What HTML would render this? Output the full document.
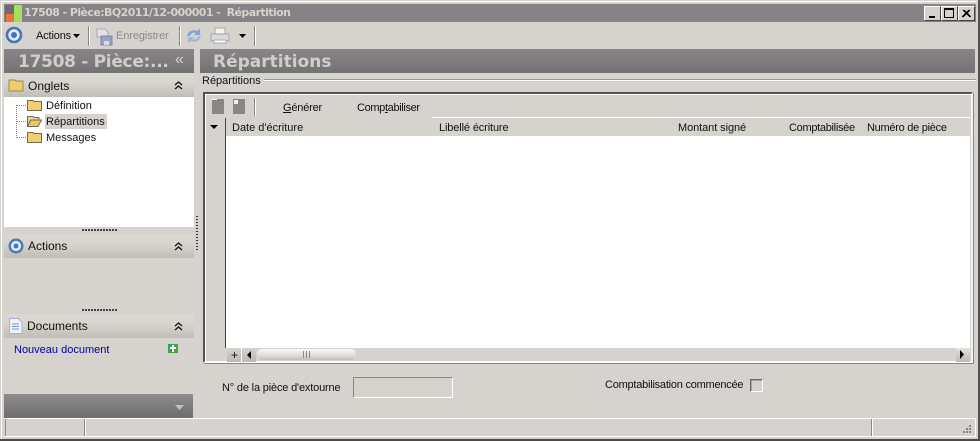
<!DOCTYPE html>
<html><head><meta charset="utf-8"><style>
html,body{margin:0;padding:0}
body{width:980px;height:441px;overflow:hidden;background:#d6d3ce;position:relative;font:11px "Liberation Sans",sans-serif;color:#111}
.a{position:absolute}
.t{position:absolute;white-space:nowrap;line-height:14px}
.hd{position:absolute;background:linear-gradient(#dcd9d4,#d8d5cf 40%,#c0bdb7)}
.bigbar{position:absolute;background:linear-gradient(#878587,#7e7c7e 50%,#737273)}
.big{position:absolute;white-space:nowrap;font:bold 17px "DejaVu Sans",sans-serif;color:#d0cec9;line-height:24px}
.sep{position:absolute;width:1px;background:#8a8884;border-right:1px solid #fff}
.chev{position:absolute;width:9px;height:9px}
</style></head><body>
<!-- window frame -->
<div class="a" style="left:1px;top:1px;width:978px;height:1px;background:#fff"></div>
<div class="a" style="left:1px;top:1px;width:1px;height:438px;background:#fff"></div>
<div class="a" style="left:977px;top:0;width:3px;height:441px;background:#55534f;border-left:1px solid #d6d3ce;box-sizing:border-box"></div>
<div class="a" style="left:0;top:439px;width:980px;height:2px;background:#4c4a48"></div>
<!-- title bar -->
<div class="a" style="left:4px;top:4px;width:972px;height:18px;background:#858385"></div>
<div class="a" style="left:5px;top:5px;width:17px;height:17px;background:#6d6b6d"></div>
<div class="a" style="left:14px;top:5px;width:8px;height:17px;background:#a5e05a"></div>
<div class="a" style="left:6px;top:14px;width:8px;height:8px;background:#e8763a"></div>
<div class="t" style="left:24px;top:6px;font:bold 11px/14px 'DejaVu Sans',sans-serif;color:#d6d3ce;letter-spacing:-.58px;white-space:pre">17508 - Pièce:BQ2011/12-000001 -  Répartition</div>
<!-- window buttons -->
<div class="a" style="left:924px;top:6px;width:15px;height:13px;background:#d6d3ce;border:1px solid;border-color:#fff #444 #444 #fff"><div class="a" style="left:4px;top:9px;width:6px;height:2px;background:#000"></div></div>
<div class="a" style="left:941px;top:6px;width:15px;height:13px;background:#d6d3ce;border:1px solid;border-color:#fff #444 #444 #fff"><div class="a" style="left:2px;top:1px;width:8px;height:7px;border:1px solid #000;border-top-width:2px"></div></div>
<div class="a" style="left:958px;top:6px;width:15px;height:13px;background:#d6d3ce;border:1px solid;border-color:#fff #444 #444 #fff"><svg class="a" style="left:3px;top:2px" width="9" height="9"><path d="M1 1L8 8M8 1L1 8M2 1L9 8M7 1L0 8" stroke="#000" stroke-width="1"/></svg></div>
<!-- toolbar -->
<svg class="a" style="left:5px;top:26px" width="18" height="18"><circle cx="9" cy="9" r="7" fill="#e6ebf5" stroke="#4474bd" stroke-width="2.6"/><circle cx="9" cy="9" r="3" fill="#3f76c6"/></svg>
<div class="t" style="left:36px;top:29px;letter-spacing:-.15px">Actions</div>
<svg class="a" style="left:72px;top:33px" width="9" height="6"><path d="M1 1H8L4.5 5Z" fill="#000"/></svg>
<div class="sep" style="left:88px;top:26px;height:20px"></div>
<svg class="a" style="left:96px;top:28px" width="17" height="18"><path d="M1 1H9L12 4V9H1Z" fill="#e4e3e2" stroke="#aab"/><rect x="5" y="8" width="11" height="9" fill="#98a3c4" stroke="#7b86aa"/><rect x="8" y="13" width="5" height="4" fill="#dcdcdc"/></svg>
<div class="t" style="left:116px;top:29px;color:#8c8a86;letter-spacing:-.1px">Enregistrer</div>
<div class="sep" style="left:179px;top:26px;height:20px"></div>
<svg class="a" style="left:185px;top:27px" width="18" height="18"><path d="M2 9C3 4 8 2 12 4L15 2V8H9L11 6C8 5 6 6 5 9Z" fill="#7fa6cf"/><path d="M16 9C15 14 10 16 6 14L3 16V10H9L7 12C10 13 12 12 13 9Z" fill="#9fb9d6"/></svg>
<svg class="a" style="left:210px;top:27px" width="20" height="18"><rect x="5" y="1" width="10" height="6" fill="#f2f2f2" stroke="#aaa"/><rect x="1" y="7" width="18" height="7" rx="1" fill="#d9d9dc" stroke="#a4a4a8"/><rect x="4" y="13" width="12" height="3" fill="#fff" stroke="#aaa"/></svg>
<svg class="a" style="left:238px;top:33px" width="9" height="6"><path d="M1 1H8L4.5 5Z" fill="#000"/></svg>
<div class="sep" style="left:254px;top:26px;height:20px"></div>
<!-- left big header -->
<div class="bigbar" style="left:4px;top:49px;width:190px;height:24px"></div>
<div class="big" style="left:18px;top:50px;letter-spacing:-.3px">17508 - Pièce:...</div>
<div class="t" style="left:175px;top:53px;font-size:16px;color:#d6d3ce">«</div>
<!-- right big header -->
<div class="bigbar" style="left:200px;top:49px;width:775px;height:24px"></div>
<div class="big" style="left:213px;top:50px">Répartitions</div>
<!-- splitter dots -->
<div class="a" style="left:196px;top:216px;width:2px;height:34px;background:repeating-linear-gradient(#333 0 1px,transparent 1px 3px)"></div>
<!-- Onglets -->
<div class="hd" style="left:4px;top:73px;width:190px;height:24px"></div>
<svg class="a" style="left:8px;top:78px" width="16" height="14"><path d="M1 2H7L8 3H15V13H1Z" fill="#f0cd6c" stroke="#a08a50"/></svg>
<div class="t" style="left:28px;top:79px;font-size:12px">Onglets</div>
<svg class="chev" style="left:174px;top:81px"><path d="M1 4L4.5 1L8 4M1 8L4.5 5L8 8" fill="none" stroke="#111" stroke-width="1.3"/></svg>
<div class="a" style="left:4px;top:97px;width:190px;height:130px;background:#fff"></div>
<!-- tree lines -->
<div class="a" style="left:16px;top:105px;width:0;height:33px;border-left:1px dotted #888"></div>
<div class="a" style="left:16px;top:105px;width:10px;border-top:1px dotted #888"></div>
<div class="a" style="left:16px;top:121px;width:10px;border-top:1px dotted #888"></div>
<div class="a" style="left:16px;top:137px;width:10px;border-top:1px dotted #888"></div>
<svg class="a" style="left:27px;top:99px" width="15" height="12"><path d="M.5 1.5H6L7 2.5H14.5V11.5H.5Z" fill="#f2d070" stroke="#706a50"/></svg>
<svg class="a" style="left:27px;top:115px" width="15" height="12"><path d="M.5 1.5H6L7 2.5H12V5H4L.5 11.5Z" fill="#e8d9a0" stroke="#706a50"/><path d="M3.5 5H14.5L11 11.5H.5Z" fill="#f0c860" stroke="#706a50"/></svg>
<svg class="a" style="left:27px;top:131px" width="15" height="12"><path d="M.5 1.5H6L7 2.5H14.5V11.5H.5Z" fill="#f2d070" stroke="#706a50"/></svg>
<div class="t" style="left:46px;top:99px">Définition</div>
<div class="a" style="left:45px;top:114px;width:62px;height:15px;background:#d6d3ce"></div>
<div class="t" style="left:46px;top:115px">Répartitions</div>
<div class="t" style="left:46px;top:131px">Messages</div>
<div class="a" style="left:82px;top:229px;width:35px;height:2px;background:repeating-linear-gradient(90deg,#444 0 2px,transparent 2px 3px)"></div>
<!-- Actions -->
<div class="hd" style="left:4px;top:234px;width:190px;height:24px"></div>
<svg class="a" style="left:8px;top:238px" width="16" height="16"><circle cx="8" cy="8" r="6.3" fill="#e6ebf5" stroke="#4a78bd" stroke-width="2.4"/><circle cx="8" cy="8" r="2.5" fill="#3f76c6"/></svg>
<div class="t" style="left:28px;top:239px;font-size:12px">Actions</div>
<svg class="chev" style="left:174px;top:242px"><path d="M1 4L4.5 1L8 4M1 8L4.5 5L8 8" fill="none" stroke="#111" stroke-width="1.3"/></svg>
<div class="a" style="left:82px;top:309px;width:35px;height:2px;background:repeating-linear-gradient(90deg,#444 0 2px,transparent 2px 3px)"></div>
<!-- Documents -->
<div class="hd" style="left:4px;top:314px;width:190px;height:24px"></div>
<svg class="a" style="left:9px;top:318px" width="14" height="16"><path d="M.5.5H9L13 4V15.5H.5Z" fill="#eef2fb" stroke="#9fb1d8"/><path d="M3 6H10M3 8.5H10M3 11H10" stroke="#7e97cf"/></svg>
<div class="t" style="left:27px;top:319px;font-size:12px">Documents</div>
<svg class="chev" style="left:174px;top:322px"><path d="M1 4L4.5 1L8 4M1 8L4.5 5L8 8" fill="none" stroke="#111" stroke-width="1.3"/></svg>
<div class="t" style="left:14px;top:343px;color:#00009c">Nouveau document</div>
<div class="a" style="left:168px;top:344px;width:10px;height:9px;background:#3fa34d"></div>
<div class="a" style="left:172px;top:345px;width:2px;height:7px;background:#fff"></div>
<div class="a" style="left:170px;top:347px;width:6px;height:2px;background:#fff"></div>
<!-- bottom left bar -->
<div class="a" style="left:4px;top:394px;width:189px;height:24px;background:linear-gradient(#8e8c8c,#7e7c7c 50%,#6f6e6e)"></div>
<svg class="a" style="left:175px;top:405px" width="9" height="5"><path d="M0 0H9L4.5 5Z" fill="#c4c2be"/></svg>
<!-- group box -->
<div class="t" style="left:202px;top:74px">Répartitions</div>
<div class="a" style="left:264px;top:79px;width:712px;height:1px;background:#9a9894;border-bottom:1px solid #fff"></div>
<!-- grid -->
<div class="a" style="left:203px;top:92px;width:770px;height:271px;box-sizing:border-box;border:2px solid;border-color:#55534f #f4f3f1 #fff #55534f;background:#d6d3ce;box-shadow:inset 1px 1px 0 #fff,1px 1px 0 #8a8884"></div>
<div class="a" style="left:212px;top:99px;width:12px;height:15px;background:#8a8688"></div>
<div class="a" style="left:212px;top:99px;width:5px;height:1px;background:#fff"></div>
<div class="a" style="left:233px;top:99px;width:12px;height:15px;background:#8a8688"></div>
<div class="a" style="left:234px;top:100px;width:4px;height:4px;background:#eee"></div>
<div class="sep" style="left:254px;top:98px;height:18px"></div>
<div class="t" style="left:283px;top:101px;letter-spacing:-.2px"><u>G</u>énérer</div>
<div class="t" style="left:357px;top:101px;letter-spacing:-.35px">Comp<u>t</u>abiliser</div>
<div class="a" style="left:432px;top:117px;width:538px;height:1px;background:#fff"></div>
<div class="a" style="left:225px;top:118px;width:1px;height:230px;background:#444"></div>
<svg class="a" style="left:210px;top:125px" width="9" height="5"><path d="M0 0H8L4 4Z" fill="#000"/></svg>
<div class="t" style="left:232px;top:121px">Date d'écriture</div>
<div class="t" style="left:439px;top:121px;letter-spacing:-.13px">Libellé écriture</div>
<div class="t" style="left:678px;top:121px;letter-spacing:-.08px">Montant signé</div>
<div class="t" style="left:789px;top:121px;letter-spacing:-.3px">Comptabilisée</div>
<div class="t" style="left:867px;top:121px;letter-spacing:-.27px">Numéro de pièce</div>
<div class="a" style="left:226px;top:136px;width:744px;height:212px;background:#fff"></div>
<!-- scrollbar -->
<div class="a" style="left:227px;top:348px;width:14px;height:14px;background:linear-gradient(#d6d3ce,#bcb9b3)"></div>
<div class="t" style="left:231px;top:348px;font-size:12px">+</div>
<div class="a" style="left:241px;top:348px;width:1px;height:14px;background:#fff"></div>
<div class="a" style="left:242px;top:348px;width:14px;height:14px;background:linear-gradient(#d6d3ce,#bcb9b3)"></div>
<svg class="a" style="left:246px;top:351px" width="6" height="9"><path d="M5 0V8L1 4Z" fill="#000"/></svg>
<div class="a" style="left:257px;top:349px;width:99px;height:11px;border-radius:5px;background:linear-gradient(#fafaf8,#dedcd7 60%,#c2bfb9)"></div>
<div class="a" style="left:303px;top:351px;width:8px;height:7px;background:repeating-linear-gradient(90deg,#8a8884 0 1px,transparent 1px 3px)"></div>
<div class="a" style="left:956px;top:348px;width:14px;height:14px;background:linear-gradient(#e4e2de,#bcb9b3)"></div>
<svg class="a" style="left:959px;top:350px" width="6" height="10"><path d="M1 0V9L5 4.5Z" fill="#000"/></svg>
<!-- form -->
<div class="t" style="left:222px;top:381px;letter-spacing:-.17px">N° de la pièce d'extourne</div>
<div class="a" style="left:353px;top:377px;width:100px;height:21px;box-sizing:border-box;border:1px solid;border-color:#8a8884 #fff #fff #8a8884"></div>
<div class="t" style="left:605px;top:378px;letter-spacing:-.23px">Comptabilisation commencée</div>
<div class="a" style="left:750px;top:379px;width:13px;height:13px;box-sizing:border-box;border:1px solid;border-color:#6a6864 #fff #fff #6a6864;box-shadow:inset 1px 1px 0 #a8a6a2"></div>
<!-- status bar -->
<div class="a" style="left:4px;top:418px;width:972px;height:1px;background:#fff"></div>
<div class="a" style="left:4px;top:436px;width:972px;height:1px;background:#fff"></div>
<div class="a" style="left:5px;top:419px;width:1px;height:17px;background:#8a8884"></div>
<div class="a" style="left:84px;top:419px;width:1px;height:17px;background:#8a8884;border-right:1px solid #fff"></div>
<div class="a" style="left:871px;top:419px;width:1px;height:17px;background:#8a8884;border-right:1px solid #fff"></div>
<div class="a" style="left:975px;top:419px;width:1px;height:18px;background:#fff"></div>
<svg class="a" style="left:960px;top:424px" width="12" height="12" fill="#8a8884"><rect x="9" y="1" width="2" height="2"/><rect x="6" y="4" width="2" height="2"/><rect x="9" y="4" width="2" height="2"/><rect x="3" y="7" width="2" height="2"/><rect x="6" y="7" width="2" height="2"/><rect x="9" y="7" width="2" height="2"/></svg>
</body></html>
